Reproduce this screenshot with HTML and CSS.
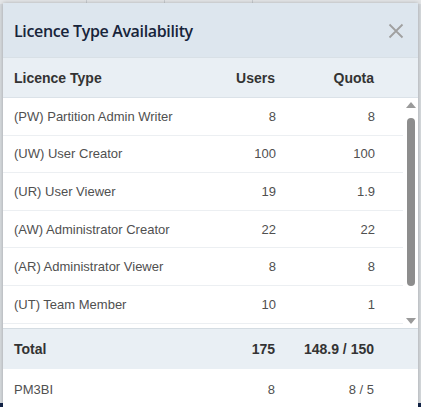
FILE: index.html
```html
<!DOCTYPE html>
<html>
<head>
<meta charset="utf-8">
<link rel="stylesheet" href="styles.css">
</head>
<body>
<div class="page">
  <div class="toolbar">
    <div class="tcell c1"></div><div class="tcell c2"></div><div class="tcell c3"></div><div class="tcell c4"></div>
  </div>
  <div class="page-body"></div>
  <div class="footer"></div>
</div>

<div class="modal">
  <div class="modal-header">
    <h2 class="modal-title">Licence Type Availability</h2>
    <button class="close" aria-label="Close">
      <svg width="16" height="16" viewBox="0 0 16 16"><path d="M1.5 1.5L14.5 14.5M14.5 1.5L1.5 14.5" stroke="#a0a0a0" stroke-width="1.8" fill="none"/></svg>
    </button>
  </div>
  <div class="row head-row">
    <span>Licence Type</span><span class="num">Users</span><span class="num">Quota</span>
  </div>
  <div class="scroll-area">
    <div class="rows">
      <div class="row body-row"><span>(PW) Partition Admin Writer</span><span class="num">8</span><span class="num">8</span></div>
      <div class="row body-row"><span>(UW) User Creator</span><span class="num">100</span><span class="num">100</span></div>
      <div class="row body-row"><span>(UR) User Viewer</span><span class="num">19</span><span class="num">1.9</span></div>
      <div class="row body-row"><span>(AW) Administrator Creator</span><span class="num">22</span><span class="num">22</span></div>
      <div class="row body-row"><span>(AR) Administrator Viewer</span><span class="num">8</span><span class="num">8</span></div>
      <div class="row body-row"><span>(UT) Team Member</span><span class="num">10</span><span class="num">1</span></div>
    </div>
    <div class="scrollbar">
      <div class="arrow up"></div>
      <div class="track"><div class="thumb"></div></div>
      <div class="arrow down"></div>
    </div>
  </div>
  <div class="row total-row">
    <span>Total</span><span class="num">175</span><span class="num">148.9 / 150</span>
  </div>
  <div class="row extra-row">
    <span>PM3BI</span><span class="num">8</span><span class="num">8 / 5</span>
  </div>
</div>
</body>
</html>
```

FILE: styles.css
```css
* { box-sizing: border-box; }
html, body { margin: 0; padding: 0; }
body {
  width: 421px;
  height: 407px;
  overflow: hidden;
  position: relative;
  font-family: "Liberation Sans", Arial, sans-serif;
  background: #d9dcdf;
}
.page {
  height: 407px;
  display: flex;
  flex-direction: column;
}
.toolbar {
  height: 4px;
  display: flex;
  background: #e4e6e8;
}
.tcell { border-right: 1px solid #c9cdd1; }
.c1 { width: 87px; }
.c2 { width: 78px; }
.c3 { width: 88px; }
.c4 { flex: 1; border-right: none; }
.page-body { flex: 1; background: #d6dade; }
.footer { height: 4px; background: #13254a; }

.modal {
  position: absolute;
  left: 3px;
  top: 3px;
  width: 415px;
  height: 410px;
  background: #fff;
  box-shadow: 0 0 4px rgba(0,0,0,0.25);
  display: flex;
  flex-direction: column;
}
.modal-header {
  height: 54px;
  background: #dde6ee;
  display: flex;
  align-items: center;
  justify-content: space-between;
  padding: 1px 14px 0 11px;
}
.modal-title {
  margin: 0;
  font-family: "Open Sans", "Noto Sans", sans-serif;
  font-weight: 600;
  font-size: 16px;
  color: #17243a;
  letter-spacing: -0.35px;
}
.close {
  border: 0;
  background: none;
  padding: 0;
  width: 16px;
  height: 16px;
  display: flex;
}
.row {
  display: grid;
  grid-template-columns: 1fr 100px 99px;
  align-items: center;
  padding: 0 44px 0 11px;
  font-size: 13px;
  color: #505050;
}
.num { text-align: right; }
.head-row {
  height: 40px;
  background: #e9eff4;
  border-top: 1px solid #d8e0e6;
  font-weight: bold;
  font-size: 14px;
  color: #333;
}
.scroll-area {
  height: 232px;
  display: flex;
  border-top: 1px solid #dbe2e8;
  border-bottom: 1px solid #d4dce2;
  overflow: hidden;
}
.rows { flex: 1; }
.body-row {
  height: 37.6px;
  padding-right: 28px;
  border-bottom: 1px solid #eceff2;
}
.scrollbar {
  width: 15px;
  display: flex;
  flex-direction: column;
  align-items: center;
  padding: 4px 0 4px;
}
.arrow {
  width: 0;
  height: 0;
  border-left: 5px solid transparent;
  border-right: 5px solid transparent;
}
.arrow.up { border-bottom: 6px solid #9a9a9a; }
.arrow.down { border-top: 6px solid #9a9a9a; }
.track {
  flex: 1;
  width: 100%;
  display: flex;
  justify-content: center;
  padding: 10px 0 30px;
}
.thumb {
  width: 8px;
  height: 168px;
  border-radius: 4px;
  background: #8d8d8d;
}
.total-row {
  height: 40px;
  background: #e9eff4;
  font-weight: bold;
  font-size: 14px;
  color: #333;
}
.extra-row {
  height: 40px;
  background: #fff;
}
```
